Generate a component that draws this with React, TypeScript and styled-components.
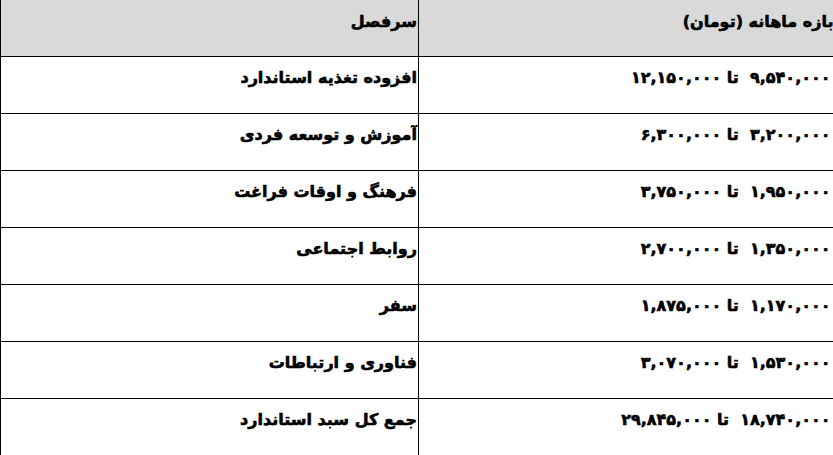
import React from 'react';
import styled, { createGlobalStyle } from 'styled-components';

const GlobalStyle = createGlobalStyle`
  html, body {
    margin: 0;
    padding: 0;
    background: #ffffff;
    overflow: hidden;
  }
`;

const rows = [
  { title: 'افزوده تغذیه استاندارد', range: '۹,۵۴۰,۰۰۰  تا ۱۲,۱۵۰,۰۰۰' },
  { title: 'آموزش و توسعه فردی', range: '۳,۲۰۰,۰۰۰  تا ۶,۳۰۰,۰۰۰' },
  { title: 'فرهنگ و اوقات فراغت', range: '۱,۹۵۰,۰۰۰  تا ۳,۷۵۰,۰۰۰' },
  { title: 'روابط اجتماعی', range: '۱,۳۵۰,۰۰۰  تا ۲,۷۰۰,۰۰۰' },
  { title: 'سفر', range: '۱,۱۷۰,۰۰۰  تا ۱,۸۷۵,۰۰۰' },
  { title: 'فناوری و ارتباطات', range: '۱,۵۳۰,۰۰۰  تا ۳,۰۷۰,۰۰۰' },
  { title: 'جمع کل سبد استاندارد', range: '۱۸,۷۴۰,۰۰۰  تا ۲۹,۸۴۵,۰۰۰' },
];

export default function App() {
  return (
    <>
      <GlobalStyle />
      <Table>
        <colgroup>
          <col style={{ width: '418px' }} />
          <col style={{ width: '416px' }} />
        </colgroup>
        <thead>
          <tr>
            <HeadCell>سرفصل</HeadCell>
            <HeadCell>بازه ماهانه (تومان)</HeadCell>
          </tr>
        </thead>
        <tbody>
          {rows.map((row, index) => (
            <tr key={index}>
              <Cell>{row.title}</Cell>
              <Cell $numeric>{row.range}</Cell>
            </tr>
          ))}
        </tbody>
      </Table>
    </>
  );
}

const Table = styled.table`
  width: 834px;
  table-layout: fixed;
  border-collapse: collapse;
  font-family: "DejaVu Sans", sans-serif;
  font-weight: bold;
  font-size: 16px;
  color: #000;
  -webkit-text-stroke: 0.6px #000;
`;

const HeadCell = styled.th`
  height: 56px;
  padding: 12px 1px 0 0;
  box-sizing: border-box;
  background-color: #d9d9d9;
  border-left: 1px solid #000;
  border-bottom: 1px solid #000;
  direction: rtl;
  text-align: right;
  vertical-align: top;
  font-weight: bold;
  white-space: pre;
`;

const Cell = styled.td<{ $numeric?: boolean }>`
  height: 57px;
  padding: 11px ${({ $numeric }) => ($numeric ? '4px' : '1px')} 0 0;
  box-sizing: border-box;
  border-left: 1px solid #000;
  border-bottom: 1px solid #000;
  direction: rtl;
  text-align: right;
  vertical-align: top;
  white-space: pre;
`;
